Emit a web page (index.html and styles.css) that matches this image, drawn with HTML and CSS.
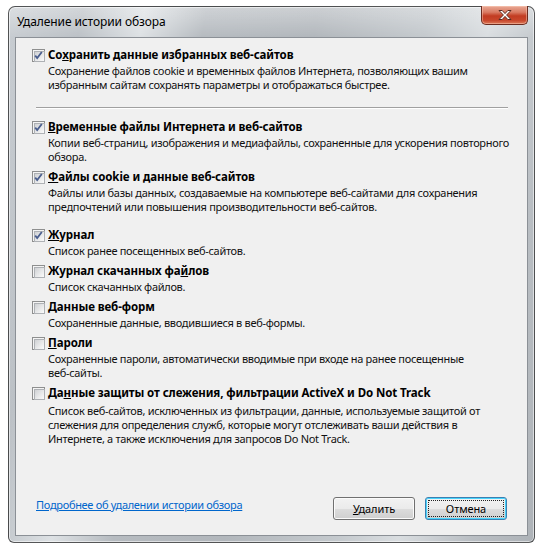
FILE: index.html
```html
<!DOCTYPE html>
<html lang="ru">
<head>
    <meta charset="UTF-8">
    <title>Удаление истории обзора</title>
    <link rel="stylesheet" href="styles.css">
</head>
<body>
    <div class="window">
        <div class="titlebar">
            <span class="title">Удаление истории обзора</span>
            <div class="close-btn">
                <svg width="16" height="12" viewBox="0 0 16 12">
                    <path d="M2 1.5h3.2L8 4.6l2.8-3.1H14L9.6 6l4.4 4.5h-3.2L8 7.4l-2.8 3.1H2L6.4 6z" fill="#fff" stroke="#5a2a22" stroke-width="1" stroke-linejoin="round"/>
                </svg>
            </div>
        </div>

        <div class="panel">
            <div class="option">
                <span class="checkbox checked"><svg width="9" height="9" viewBox="0 0 9 9"><path d="M1.2 4.6l2 2.4 4.6-6" fill="none" stroke="#4a5e8e" stroke-width="1.8"/></svg></span>
                <span class="option-title">Со<u>х</u>ранить данные избранных веб-сайтов</span>
                <p class="option-desc">Сохранение файлов cookie и временных файлов Интернета, позволяющих вашим избранным сайтам сохранять параметры и отображаться быстрее.</p>
            </div>

            <div class="separator"></div>

            <div class="option">
                <span class="checkbox checked"><svg width="9" height="9" viewBox="0 0 9 9"><path d="M1.2 4.6l2 2.4 4.6-6" fill="none" stroke="#4a5e8e" stroke-width="1.8"/></svg></span>
                <span class="option-title"><u>В</u>ременные файлы Интернета и веб-сайтов</span>
                <p class="option-desc">Копии веб-страниц, изображения и медиафайлы, сохраненные для ускорения повторного обзора.</p>
            </div>

            <div class="option">
                <span class="checkbox checked"><svg width="9" height="9" viewBox="0 0 9 9"><path d="M1.2 4.6l2 2.4 4.6-6" fill="none" stroke="#4a5e8e" stroke-width="1.8"/></svg></span>
                <span class="option-title"><u>Ф</u>айлы cookie и данные веб-сайтов</span>
                <p class="option-desc">Файлы или базы данных, создаваемые на компьютере веб-сайтами для сохранения предпочтений или повышения производительности веб-сайтов.</p>
            </div>

            <div class="option option-spaced">
                <span class="checkbox checked"><svg width="9" height="9" viewBox="0 0 9 9"><path d="M1.2 4.6l2 2.4 4.6-6" fill="none" stroke="#4a5e8e" stroke-width="1.8"/></svg></span>
                <span class="option-title"><u>Ж</u>урнал</span>
                <p class="option-desc">Список ранее посещенных веб-сайтов.</p>
            </div>

            <div class="option">
                <span class="checkbox"></span>
                <span class="option-title">Журнал скачанных фа<u>й</u>лов</span>
                <p class="option-desc">Список скачанных файлов.</p>
            </div>

            <div class="option">
                <span class="checkbox"></span>
                <span class="option-title"><u>Д</u>анные веб-форм</span>
                <p class="option-desc">Сохраненные данные, вводившиеся в веб-формы.</p>
            </div>

            <div class="option">
                <span class="checkbox"></span>
                <span class="option-title"><u>П</u>ароли</span>
                <p class="option-desc">Сохраненные пароли, автоматически вводимые при входе на ранее посещенные <span class="nowrap">веб-сайты.</span></p>
            </div>

            <div class="option">
                <span class="checkbox"></span>
                <span class="option-title">Да<u>н</u>ные защиты от слежения, фильтрации ActiveX и Do Not Track</span>
                <p class="option-desc option-desc-spaced">Список веб-сайтов, исключенных из фильтрации, данные, используемые защитой от слежения для определения служб, которые могут отслеживать ваши действия в Интернете, а также исключения для запросов Do Not Track.</p>
            </div>

            <div class="footer">
                <a class="link" href="#">Подробнее об удалении истории обзора</a>
                <div class="buttons">
                    <button class="button"><u>У</u>далить</button>
                    <button class="button button-default">Отмена</button>
                </div>
            </div>
        </div>
    </div>
</body>
</html>
```

FILE: styles.css
```css
* {
    margin: 0;
    padding: 0;
    box-sizing: border-box;
}

body {
    font-family: "Noto Sans", "Open Sans", sans-serif;
    font-size: 11px;
    letter-spacing: -0.3px;
    color: #000;
    background: #fff;
}

.window {
    margin: 6px 0 0 8px;
    width: 527px;
    height: 537px;
    border: 1px solid rgba(30, 30, 30, 0.7);
    border-radius: 7px 7px 6px 6px;
    padding: 0 6px 6px 6px;
    display: flex;
    flex-direction: column;
    background:
        linear-gradient(180deg, rgba(255, 255, 255, 0.35) 0, rgba(255, 255, 255, 0) 30px),
        linear-gradient(100deg, #c8cdd2 0%, #bcc1c6 12%, #dde1e4 22%, #b6bbc0 32%, #b2b7bc 50%, #c4c9cd 68%, #d9dde0 78%, #b9bec3 90%, #aeb3b8 100%);
    box-shadow: inset 0 0 0 1px rgba(255, 255, 255, 0.55);
}

.titlebar {
    height: 30px;
    display: flex;
    justify-content: space-between;
    align-items: flex-start;
}

.title {
    margin: 7px 0 0 2px;
    font-size: 12px;
    letter-spacing: -0.1px;
    line-height: 16px;
    color: #000;
}

.close-btn {
    width: 47px;
    height: 19px;
    margin-top: -1px;
    border: 1px solid #6b2b1f;
    border-top: none;
    border-radius: 0 0 5px 5px;
    background: linear-gradient(180deg, #e9a996 0%, #d97a62 35%, #c23c22 55%, #c8472c 80%, #dc7a5a 100%);
    box-shadow: inset 0 0 0 1px rgba(255, 210, 190, 0.45);
    display: flex;
    align-items: center;
    justify-content: center;
}

.panel {
    flex: 1;
    border: 1px solid #8b9096;
    background: #f0f0f0;
    padding: 9px 14px 15px 16px;
    display: flex;
    flex-direction: column;
}

.option {
    display: grid;
    grid-template-columns: 16px 1fr;
    margin-top: 5px;
}

.option:first-child {
    margin-top: 0;
}

.option-spaced {
    margin-top: 13px;
}

.option-title {
    font-size: 11.5px;
    font-weight: 700;
    letter-spacing: -0.1px;
    line-height: 16px;
}

.option-desc {
    grid-column: 2;
    line-height: 14px;
    margin-top: 1px;
    color: #111;
}

.option-desc-spaced {
    margin-top: 3px;
}

.nowrap {
    white-space: nowrap;
}

.checkbox {
    width: 13px;
    height: 13px;
    margin-top: 2px;
    border: 1px solid #8e8f8f;
    background: #f4f4f4;
    padding: 1px;
    position: relative;
}

.checkbox::before {
    content: "";
    display: block;
    width: 9px;
    height: 9px;
    border: 1px solid #aeb1b5;
    background: linear-gradient(135deg, #cfd1d4 0%, #e6e7e8 50%, #fbfbfb 100%);
}

.checkbox svg {
    position: absolute;
    left: 1px;
    top: 1px;
}

.separator {
    margin: 15px 5px 5px 4px;
    border-top: 1px solid #a0a0a0;
    border-bottom: 1px solid #fff;
}

.footer {
    margin-top: auto;
    display: flex;
    justify-content: space-between;
    align-items: flex-start;
}

.link {
    margin-left: 4px;
    line-height: 16px;
    color: #0066cc;
}

.buttons {
    display: flex;
    gap: 10px;
    margin-right: 6px;
}

.button {
    width: 82px;
    height: 23px;
    font-family: inherit;
    font-size: 11px;
    letter-spacing: -0.1px;
    color: #000;
    border: 1px solid #707070;
    border-radius: 3px;
    background: linear-gradient(180deg, #f2f2f2 0%, #ebebeb 50%, #dddddd 51%, #cfcfcf 100%);
    box-shadow: inset 0 0 0 1px #fbfbfb;
    position: relative;
}

.button-default {
    border-color: #3c7fb1;
    box-shadow: inset 0 0 0 1px #48d4fc;
}

.button-default::after {
    content: "";
    position: absolute;
    left: 2px;
    top: 2px;
    right: 2px;
    bottom: 2px;
    border: 1px dotted #222;
}
```
